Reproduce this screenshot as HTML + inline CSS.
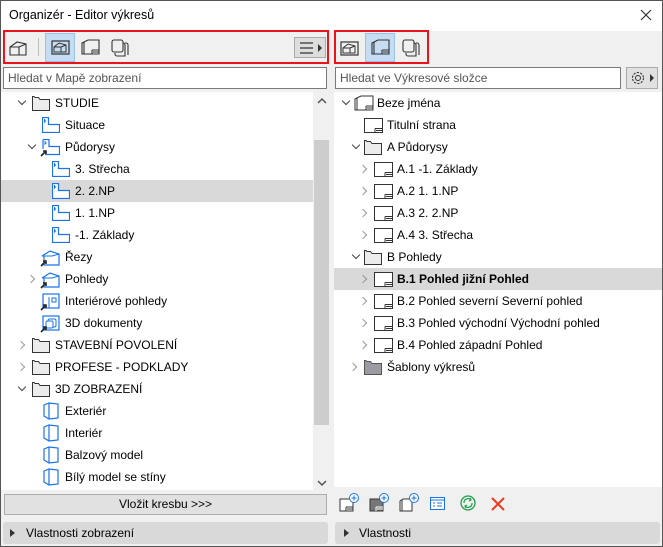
<!DOCTYPE html>
<html><head><meta charset="utf-8"><style>
*{margin:0;padding:0;box-sizing:border-box}
body{width:663px;height:547px;overflow:hidden;background:#f0f0f0;font-family:"Liberation Sans",sans-serif;font-size:12px;color:#000;position:relative}
.a{position:absolute}
.win{left:0;top:0;width:663px;height:547px;border:1px solid #555;background:#f0f0f0}
.t{position:absolute;white-space:nowrap;line-height:22px;height:22px}
.sel{background:#d9d9d9}
svg{position:absolute;overflow:visible}
.chev{position:absolute;width:6px;height:6px;border-right:1.5px solid #999;border-bottom:1.5px solid #999}
.cd{transform:rotate(45deg)}
.cr{transform:rotate(-45deg)}
.cdk{border-color:#444}
</style></head><body>
<div class="a win"></div>
<div class="a" style="left:1px;top:1px;width:661px;height:30px;background:#fff"></div>
<div class="a" style="left:9px;top:8px;font-size:12.5px">Organizér - Editor výkresů</div>
<svg style="left:640px;top:9px" width="12" height="12"><path d="M1 1L11 11M11 1L1 11" stroke="#333" stroke-width="1.2"/></svg>

<!-- toolbars -->
<div class="a" style="left:3px;top:30px;width:326px;height:34px;border:2px solid #e8141a"></div>
<div class="a" style="left:334px;top:30px;width:95px;height:34px;border:2px solid #e8141a"></div>
<svg style="left:9px;top:40px" width="20" height="16"><path d="M1 15V7L8 2L17 4V15ZM1 7L10 7L17 4M10 7V15L17 15" fill="none" stroke="#333" stroke-width="1.1"/></svg>
<div class="a" style="left:38px;top:38px;width:1px;height:18px;background:#bbb"></div>
<div class="a" style="left:45px;top:33px;width:30px;height:29px;background:#c5dcf2;border:1px solid #99c2e8"></div>
<svg style="left:51px;top:39px" width="20" height="16"><rect x="1" y="2" width="17" height="13" fill="none" stroke="#333" stroke-width="1.2"/><path d="M3 13V8L8 4L15 6V13ZM3 8H10L15 6M10 8V13" fill="none" stroke="#333" stroke-width="1"/></svg>
<svg style="left:81px;top:39px" width="20" height="17"><path d="M3 3L7 1H18V15H1V4ZM3 3V15M11 11H18M11 11V15M12 13H18" fill="none" stroke="#333" stroke-width="1.1"/></svg>
<svg style="left:111px;top:39px" width="18" height="18"><rect x="1" y="1" width="11" height="12" rx="2" fill="none" stroke="#333" stroke-width="1.1"/><path d="M4 14V15A2 2 0 0 0 6 17H14V6A2 2 0 0 0 12 4" fill="none" stroke="#333" stroke-width="1.1"/><path d="M14 4H15A2 2 0 0 1 17 6V16" fill="none" stroke="#333" stroke-width="1.1"/></svg>
<div class="a" style="left:294px;top:37px;width:32px;height:21px;background:#ddd;border:1px solid #aaa"></div>
<svg style="left:300px;top:42px" width="24" height="12"><path d="M0 1H13M0 6H13M0 11H13" stroke="#333" stroke-width="1.2"/><path d="M18 2L22 6L18 10Z" fill="#333"/></svg>

<svg style="left:340px;top:40px" width="20" height="16"><rect x="1" y="2" width="17" height="13" fill="none" stroke="#333" stroke-width="1.2"/><path d="M3 13V8L8 4L15 6V13ZM3 8H10L15 6M10 8V13" fill="none" stroke="#333" stroke-width="1"/></svg>
<div class="a" style="left:365px;top:33px;width:30px;height:29px;background:#c5dcf2;border:1px solid #99c2e8"></div>
<svg style="left:371px;top:39px" width="20" height="17"><path d="M3 3L7 1H18V15H1V4ZM3 3V15M11 11H18M11 11V15M12 13H18" fill="none" stroke="#333" stroke-width="1.1"/></svg>
<svg style="left:402px;top:39px" width="18" height="18"><rect x="1" y="1" width="11" height="12" rx="2" fill="none" stroke="#333" stroke-width="1.1"/><path d="M4 14V15A2 2 0 0 0 6 17H14V6A2 2 0 0 0 12 4" fill="none" stroke="#333" stroke-width="1.1"/><path d="M14 4H15A2 2 0 0 1 17 6V16" fill="none" stroke="#333" stroke-width="1.1"/></svg>

<!-- search -->
<div class="a" style="left:3px;top:67px;width:324px;height:22px;background:#fff;border:1px solid #7a7a7a"></div>
<div class="a" style="left:8px;top:71px;color:#555">Hledat v Mapě zobrazení</div>
<div class="a" style="left:335px;top:67px;width:286px;height:22px;background:#fff;border:1px solid #7a7a7a"></div>
<div class="a" style="left:340px;top:71px;color:#555">Hledat ve Výkresové složce</div>
<div class="a" style="left:626px;top:67px;width:32px;height:22px;background:#e1e1e1;border:1px solid #aaa"></div>
<svg style="left:630px;top:70px" width="26" height="16"><circle cx="8" cy="8" r="5.5" fill="none" stroke="#333" stroke-width="1.1" stroke-dasharray="2.2 1.3"/><circle cx="8" cy="8" r="2.5" fill="none" stroke="#333"/><path d="M20 4L24 8L20 12Z" fill="#333"/></svg>

<!-- left tree -->
<div class="a" style="left:1px;top:92px;width:312px;height:398px;background:#fff"></div>
<div class="a" style="left:313px;top:92px;width:16px;height:398px;background:#f0f0f0"></div>
<div class="a" style="left:314px;top:140px;width:15px;height:285px;background:#cdcdcd"></div>
<svg style="left:317px;top:98px" width="10" height="6"><path d="M1 5L5 1L9 5" fill="none" stroke="#555" stroke-width="1.5"/></svg>
<svg style="left:317px;top:480px" width="10" height="6"><path d="M1 1L5 5L9 1" fill="none" stroke="#555" stroke-width="1.5"/></svg>
<div class="a sel" style="left:1px;top:180px;width:312px;height:22px"></div>

<!-- right tree -->
<div class="a" style="left:334px;top:92px;width:328px;height:395px;background:#fff"></div>
<div class="a sel" style="left:334px;top:268px;width:328px;height:22px"></div>

<svg width="0" height="0"><defs>
<symbol id="fold" viewBox="0 0 18 16"><path d="M0.5 2.5V15.5H17.5V4.5H8L6.5 2.5H3L2 1.5H0.5Z" fill="#ececec" stroke="#333"/></symbol>
<symbol id="foldg" viewBox="0 0 18 16"><path d="M0.5 2.5V15.5H17.5V4.5H8L6.5 2.5H3L2 1.5H0.5Z" fill="#9a9ca2" stroke="#555"/></symbol>
<symbol id="plan" viewBox="0 0 18 16"><path d="M0.5 0.5H6.5V7.5H17.5V15.5H0.5Z" fill="#fff" stroke="#1a73e8" stroke-width="1.2"/><path d="M2.5 2V5L4 3.5" fill="none" stroke="#1a73e8"/></symbol>
<symbol id="sheet" viewBox="0 0 20 16"><rect x="0.5" y="1.5" width="18" height="14" fill="#fff" stroke="#333"/><path d="M11 11.5H18.5M11 11.5V15.5M12 13.5H18" stroke="#333" fill="none"/></symbol>
<symbol id="cube" viewBox="0 0 16 18"><path d="M1 3L6 1L15 2V16L6 17L1 14ZM6 1V17" fill="#fff" stroke="#1a73e8" stroke-width="1.2"/></symbol>
<symbol id="sec" viewBox="0 0 20 18"><path d="M2 7L10 2L19 5V16H4V7" fill="#fff" stroke="#1a73e8" stroke-width="1.2"/><path d="M2 7H12L19 5" fill="none" stroke="#1a73e8"/><path d="M1 17L5 13M3 12H6V15" stroke="#222" stroke-width="1.6" fill="none"/></symbol>
<symbol id="splan" viewBox="0 0 20 18"><path d="M3 0.5H9V7.5H19.5V15.5H5" fill="#fff" stroke="#1a73e8" stroke-width="1.2"/><path d="M3 0.5V10" stroke="#1a73e8" stroke-width="1.2"/><path d="M5 2V5L6.5 3.5" fill="none" stroke="#1a73e8"/><path d="M1 17L5 13M3 12H6V15" stroke="#222" stroke-width="1.6" fill="none"/></symbol>
<symbol id="int" viewBox="0 0 20 18"><rect x="3" y="1" width="16" height="14" fill="#fff" stroke="#1a73e8" stroke-width="1.2"/><path d="M9 4V15M12 5H16V9H12Z" fill="none" stroke="#1a73e8"/><path d="M1 17L5 13M3 12H6V15" stroke="#222" stroke-width="1.6" fill="none"/></symbol>
<symbol id="d3" viewBox="0 0 20 18"><rect x="3" y="1" width="16" height="14" fill="#fff" stroke="#1a73e8" stroke-width="1.2"/><rect x="8" y="4" width="8" height="8" rx="1.5" fill="none" stroke="#1a73e8"/><rect x="6" y="6" width="7" height="7" rx="1.5" fill="#fff" stroke="#1a73e8"/><path d="M1 17L5 13M3 12H6V15" stroke="#222" stroke-width="1.6" fill="none"/></symbol>
<symbol id="book" viewBox="0 0 20 16"><path d="M3 3L7 1H19V15H1V4ZM3 3V15M12 11H19M12 11V15M13 13H19" fill="#fff" stroke="#333"/></symbol>
</defs></svg>

<!-- left rows -->
<div class="chev cd cdk" style="left:19px;top:98px"></div>
<svg style="left:32px;top:95px" width="18" height="16"><use href="#fold"/></svg><div class="t" style="left:55px;top:92px">STUDIE</div>
<svg style="left:42px;top:117px" width="18" height="16"><use href="#plan"/></svg><div class="t" style="left:65px;top:114px">Situace</div>
<div class="chev cd cdk" style="left:29px;top:142px"></div>
<svg style="left:40px;top:139px" width="20" height="18"><use href="#splan"/></svg><div class="t" style="left:65px;top:136px">Půdorysy</div>
<svg style="left:52px;top:161px" width="18" height="16"><use href="#plan"/></svg><div class="t" style="left:75px;top:158px">3. Střecha</div>
<svg style="left:52px;top:183px" width="18" height="16"><use href="#plan"/></svg><div class="t" style="left:75px;top:180px">2. 2.NP</div>
<svg style="left:52px;top:205px" width="18" height="16"><use href="#plan"/></svg><div class="t" style="left:75px;top:202px">1. 1.NP</div>
<svg style="left:52px;top:227px" width="18" height="16"><use href="#plan"/></svg><div class="t" style="left:75px;top:224px">-1. Základy</div>
<svg style="left:40px;top:249px" width="20" height="18"><use href="#sec"/></svg><div class="t" style="left:65px;top:246px">Řezy</div>
<div class="chev cr" style="left:28px;top:276px"></div>
<svg style="left:40px;top:271px" width="20" height="18"><use href="#sec"/></svg><div class="t" style="left:65px;top:268px">Pohledy</div>
<svg style="left:40px;top:293px" width="20" height="18"><use href="#int"/></svg><div class="t" style="left:65px;top:290px">Interiérové pohledy</div>
<svg style="left:40px;top:315px" width="20" height="18"><use href="#d3"/></svg><div class="t" style="left:65px;top:312px">3D dokumenty</div>
<div class="chev cr" style="left:18px;top:342px"></div>
<svg style="left:32px;top:337px" width="18" height="16"><use href="#fold"/></svg><div class="t" style="left:55px;top:334px">STAVEBNÍ POVOLENÍ</div>
<div class="chev cr" style="left:18px;top:364px"></div>
<svg style="left:32px;top:359px" width="18" height="16"><use href="#fold"/></svg><div class="t" style="left:55px;top:356px">PROFESE - PODKLADY</div>
<div class="chev cd cdk" style="left:19px;top:384px"></div>
<svg style="left:32px;top:381px" width="18" height="16"><use href="#fold"/></svg><div class="t" style="left:55px;top:378px">3D ZOBRAZENÍ</div>
<svg style="left:43px;top:402px" width="16" height="18"><use href="#cube"/></svg><div class="t" style="left:65px;top:400px">Exteriér</div>
<svg style="left:43px;top:424px" width="16" height="18"><use href="#cube"/></svg><div class="t" style="left:65px;top:422px">Interiér</div>
<svg style="left:43px;top:446px" width="16" height="18"><use href="#cube"/></svg><div class="t" style="left:65px;top:444px">Balzový model</div>
<svg style="left:43px;top:468px" width="16" height="18"><use href="#cube"/></svg><div class="t" style="left:65px;top:466px">Bílý model se stíny</div>

<!-- right rows -->
<div class="chev cd cdk" style="left:343px;top:98px"></div>
<svg style="left:354px;top:95px" width="20" height="16"><use href="#book"/></svg><div class="t" style="left:377px;top:92px">Beze jména</div>
<svg style="left:364px;top:117px" width="20" height="16"><use href="#sheet"/></svg><div class="t" style="left:387px;top:114px">Titulní strana</div>
<div class="chev cd cdk" style="left:353px;top:142px"></div>
<svg style="left:364px;top:139px" width="18" height="16"><use href="#fold"/></svg><div class="t" style="left:387px;top:136px">A Půdorysy</div>
<div class="chev cr" style="left:360px;top:166px"></div><svg style="left:374px;top:161px" width="20" height="16"><use href="#sheet"/></svg><div class="t" style="left:397px;top:158px">A.1 -1. Základy</div>
<div class="chev cr" style="left:360px;top:188px"></div><svg style="left:374px;top:183px" width="20" height="16"><use href="#sheet"/></svg><div class="t" style="left:397px;top:180px">A.2 1. 1.NP</div>
<div class="chev cr" style="left:360px;top:210px"></div><svg style="left:374px;top:205px" width="20" height="16"><use href="#sheet"/></svg><div class="t" style="left:397px;top:202px">A.3 2. 2.NP</div>
<div class="chev cr" style="left:360px;top:232px"></div><svg style="left:374px;top:227px" width="20" height="16"><use href="#sheet"/></svg><div class="t" style="left:397px;top:224px">A.4 3. Střecha</div>
<div class="chev cd cdk" style="left:353px;top:252px"></div>
<svg style="left:364px;top:249px" width="18" height="16"><use href="#fold"/></svg><div class="t" style="left:387px;top:246px">B Pohledy</div>
<div class="chev cr" style="left:360px;top:276px"></div><svg style="left:374px;top:271px" width="20" height="16"><use href="#sheet"/></svg><div class="t" style="left:397px;top:268px;font-weight:bold">B.1 Pohled jižní Pohled</div>
<div class="chev cr" style="left:360px;top:298px"></div><svg style="left:374px;top:293px" width="20" height="16"><use href="#sheet"/></svg><div class="t" style="left:397px;top:290px">B.2 Pohled severní Severní pohled</div>
<div class="chev cr" style="left:360px;top:320px"></div><svg style="left:374px;top:315px" width="20" height="16"><use href="#sheet"/></svg><div class="t" style="left:397px;top:312px">B.3 Pohled východní Východní pohled</div>
<div class="chev cr" style="left:360px;top:342px"></div><svg style="left:374px;top:337px" width="20" height="16"><use href="#sheet"/></svg><div class="t" style="left:397px;top:334px">B.4 Pohled západní Pohled</div>
<div class="chev cr" style="left:350px;top:364px"></div>
<svg style="left:364px;top:359px" width="18" height="16"><use href="#foldg"/></svg><div class="t" style="left:387px;top:356px">Šablony výkresů</div>

<!-- bottom -->
<div class="a" style="left:4px;top:494px;width:323px;height:21px;background:#e1e1e1;border:1px solid #adadad;text-align:center;line-height:19px">Vložit kresbu &gt;&gt;&gt;</div>
<div class="a" style="left:3px;top:522px;width:325px;height:22px;background:#d9d9d9;border-radius:3px"></div>
<svg style="left:10px;top:529px" width="5" height="8"><path d="M0 0L5 4L0 8Z" fill="#333"/></svg>
<div class="a" style="left:26px;top:526px">Vlastnosti zobrazení</div>
<div class="a" style="left:335px;top:522px;width:325px;height:22px;background:#d9d9d9;border-radius:3px"></div>
<svg style="left:344px;top:529px" width="5" height="8"><path d="M0 0L5 4L0 8Z" fill="#333"/></svg>
<div class="a" style="left:359px;top:526px">Vlastnosti</div>

<svg style="left:339px;top:493px" width="22" height="20"><rect x="1" y="6" width="13" height="12" fill="#fff" stroke="#333"/><path d="M7 14H14M7 14V18M8 16H14" stroke="#333" fill="none"/><circle cx="15" cy="5" r="4.5" fill="#fff" stroke="#1a73e8"/><path d="M15 2.5V7.5M12.5 5H17.5" stroke="#1a73e8"/></svg>
<svg style="left:369px;top:493px" width="22" height="20"><rect x="1" y="6" width="13" height="12" fill="#777" stroke="#333"/><path d="M7 14H14M7 14V18M8 16H14" stroke="#fff" fill="none"/><circle cx="15" cy="5" r="4.5" fill="#fff" stroke="#1a73e8"/><path d="M15 2.5V7.5M12.5 5H17.5" stroke="#1a73e8"/></svg>
<svg style="left:399px;top:493px" width="22" height="20"><path d="M1 8L4 6H13V18H1Z" fill="#fff" stroke="#333"/><path d="M3 7V18" stroke="#333"/><circle cx="15" cy="5" r="4.5" fill="#fff" stroke="#1a73e8"/><path d="M15 2.5V7.5M12.5 5H17.5" stroke="#1a73e8"/></svg>
<svg style="left:430px;top:497px" width="16" height="14"><rect x="0.5" y="0.5" width="14" height="12" fill="#fff" stroke="#1a73e8"/><path d="M0.5 3H14.5M3 6H5M7 6H12M3 9H5M7 9H12" stroke="#1a73e8"/></svg>
<svg style="left:460px;top:495px" width="16" height="16"><circle cx="8" cy="8" r="7" fill="none" stroke="#1aa04a" stroke-width="1.3"/><path d="M4 8A4 4 0 0 1 11 5M12 8A4 4 0 0 1 5 11M10 3L11 5L9 6M6 13L5 11L7 10" fill="none" stroke="#1aa04a" stroke-width="1.2"/></svg>
<svg style="left:491px;top:497px" width="14" height="14"><path d="M1 1L13 13M13 1L1 13" stroke="#e83a1a" stroke-width="2"/></svg>
</body></html>
